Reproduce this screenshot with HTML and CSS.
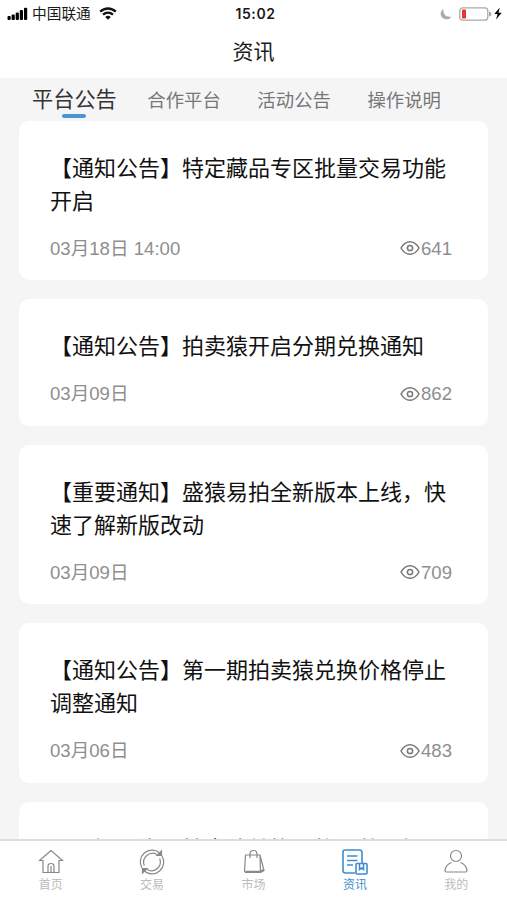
FILE: index.html
```html
<!DOCTYPE html>
<html lang="zh-CN">
<head>
    <meta charset="UTF-8">
    <meta name="viewport" content="width=device-width, initial-scale=1.0">
    <title>资讯</title>
    <link rel="stylesheet" href="styles.css">
</head>
<body>
    <svg class="symbols" width="0" height="0">
        <symbol id="eye" viewBox="0 0 20 16">
            <path d="M1 8C3.4 3.8 6.3 1.7 10 1.7S16.6 3.8 19 8C16.6 12.2 13.7 14.3 10 14.3S3.4 12.2 1 8Z"/>
            <circle cx="10" cy="8" r="2.6"/>
        </symbol>
    </svg>
    <div class="app">
        <header>
            <div class="status-bar">
                <div class="status-left">
                    <svg width="21" height="13" viewBox="0 0 21 13">
                        <rect x="0.5" y="9" width="3.2" height="4" rx="1"/>
                        <rect x="4.6" y="7.5" width="3.2" height="5.5" rx="1"/>
                        <rect x="8.7" y="5.5" width="3.2" height="7.5" rx="1"/>
                        <rect x="12.8" y="3" width="3.2" height="10" rx="1"/>
                        <rect x="17" y="0.8" width="3.2" height="12.2" rx="1"/>
                    </svg>
                    <span class="carrier">中国联通</span>
                    <svg class="wifi" width="18" height="13" viewBox="0 0 18 13">
                        <path d="M1.2 4.7C5.7 0.4 12.3 0.4 16.8 4.7M4 7.7C7 5 11 5 14 7.7"/>
                        <path class="solid" d="M9 12.7L6.2 9.9Q9 7.7 11.8 9.9Z"/>
                    </svg>
                </div>
                <span class="time">15:02</span>
                <div class="status-right">
                    <svg class="moon" width="12" height="12" viewBox="0 0 12 12">
                        <path d="M3.5 1C-0.5 3.5 0 8 3 10.2C6 12.3 10 11.4 11.3 8.4C6.5 9.8 2.5 6 3.5 1Z"/>
                    </svg>
                    <svg class="battery" width="33" height="14" viewBox="0 0 33 14">
                        <rect class="shell" x="0.8" y="0.8" width="28" height="12.4" rx="3"/>
                        <rect class="level" x="3" y="2.5" width="4" height="9" rx="0.8"/>
                        <path class="cap" d="M30 4.5Q32.5 5 32.5 7T30 9.5Z"/>
                    </svg>
                    <svg class="bolt" width="8" height="13" viewBox="0 0 8 13">
                        <path d="M5.8 0.5L0.3 7H3.6L2 12.5L7.7 5.7H4.4Z"/>
                    </svg>
                </div>
            </div>
            <h1>资讯</h1>
        </header>

        <nav class="tabs">
            <a class="tab active">平台公告</a>
            <a class="tab">合作平台</a>
            <a class="tab">活动公告</a>
            <a class="tab">操作说明</a>
        </nav>

        <main class="list">
            <article class="card">
                <h2>【通知公告】特定藏品专区批量交易功能开启</h2>
                <div class="meta">
                    <span>03月18日 14:00</span>
                    <span class="views"><svg class="eye"><use href="#eye"/></svg>641</span>
                </div>
            </article>
            <article class="card">
                <h2>【通知公告】拍卖猿开启分期兑换通知</h2>
                <div class="meta">
                    <span>03月09日</span>
                    <span class="views"><svg class="eye"><use href="#eye"/></svg>862</span>
                </div>
            </article>
            <article class="card">
                <h2>【重要通知】盛猿易拍全新版本上线，快速了解新版改动</h2>
                <div class="meta">
                    <span>03月09日</span>
                    <span class="views"><svg class="eye"><use href="#eye"/></svg>709</span>
                </div>
            </article>
            <article class="card">
                <h2>【通知公告】第一期拍卖猿兑换价格停止调整通知</h2>
                <div class="meta">
                    <span>03月06日</span>
                    <span class="views"><svg class="eye"><use href="#eye"/></svg>483</span>
                </div>
            </article>
            <article class="card">
                <h2>【通知公告】拍卖猿兑换价格调整通知</h2>
            </article>
        </main>

        <footer class="bottom-nav">
            <a class="nav-item">
                <svg width="26" height="26" viewBox="0 0 26 26">
                    <path d="M13 1.5L1.5 11.5H5V23.5H21V11.5H24.5ZM10 23V17Q10 14.5 13 14.5T16 17V23M13 17V23"/>
                </svg>
                <span>首页</span>
            </a>
            <a class="nav-item">
                <svg width="26" height="26" viewBox="0 0 26 26">
                    <path d="M3 19A11.8 11.8 0 0 1 20.5 3.7M23 7A11.8 11.8 0 0 1 5.5 22.3M5.3 16.5A8.9 8.9 0 0 1 18 5.5M20.7 9.5A8.9 8.9 0 0 1 8 20.5"/>
                    <path class="arrow" d="M18 6.5L22.5 2V6.5ZM8 19.5L3.5 24V19.5Z"/>
                </svg>
                <span>交易</span>
            </a>
            <a class="nav-item">
                <svg width="26" height="26" viewBox="0 0 26 26">
                    <path d="M4.5 6H19L23 21.5L19.5 23.5H4.5L3.5 22ZM19 6L19.5 23.5M9 9V5Q9 1.5 12.5 1.5T16 5V9"/>
                    <path class="thick" d="M4.5 22.8H19L22.5 21"/>
                </svg>
                <span>市场</span>
            </a>
            <a class="nav-item active">
                <svg width="26" height="26" viewBox="0 0 26 26">
                    <path d="M13 24H3.5Q1 24 1 21.5V3Q1 1 3 1H17.5Q20 1 20 3.5V14M5 7H15.5M5 11.5H15.5M5 16H11"/>
                    <rect x="14" y="14.5" width="11" height="10.5" rx="1"/>
                    <path d="M17.5 15V20.5L19.5 19L21.5 20.5V15"/>
                </svg>
                <span>资讯</span>
            </a>
            <a class="nav-item">
                <svg width="26" height="26" viewBox="0 0 26 26">
                    <circle cx="13" cy="7" r="5.5"/>
                    <path d="M8.5 13.5Q2.5 16 2 21.5Q2 23 3.5 23H22.5Q24 23 24 21.5Q23.5 16 17.5 13.5"/>
                </svg>
                <span>我的</span>
            </a>
        </footer>
    </div>
</body>
</html>
```

FILE: styles.css
```css
* {
    box-sizing: border-box;
}
body {
    margin: 0;
    font-family: "Liberation Sans", "Noto Sans CJK SC", sans-serif;
    background-color: #f5f5f6;
    color: #1a1a1a;
}
h1, h2 {
    margin: 0;
    font-weight: normal;
}
.symbols {
    display: block;
}
.app {
    display: flex;
    flex-direction: column;
    height: 100vh;
    overflow: hidden;
}
header {
    flex: none;
    height: 78px;
    background-color: #fff;
}
.status-bar {
    display: grid;
    grid-template-columns: 1fr auto 1fr;
    align-items: center;
    height: 27px;
    padding: 0 5px 0 7px;
}
.status-left, .status-right {
    display: flex;
    align-items: center;
}
.status-right {
    justify-content: flex-end;
}
.carrier {
    margin-left: 4px;
    font-size: 14.7px;
    line-height: 20px;
}
.wifi {
    margin-left: 8px;
    fill: none;
    stroke: #111;
    stroke-width: 2.3;
}
.wifi .solid {
    fill: #111;
    stroke: none;
}
.time {
    padding-left: 2px;
    font-family: Inter, sans-serif;
    font-size: 14px;
    font-weight: 600;
    letter-spacing: 0.6px;
}
.moon {
    fill: #aaa;
    margin-right: 7px;
}
.battery .shell {
    fill: none;
    stroke: #aaa;
    stroke-width: 1.3;
}
.battery .level {
    fill: #e5352d;
}
.battery .cap {
    fill: #aaa;
}
.bolt {
    margin-left: 2px;
}
h1 {
    padding-top: 9px;
    font-size: 21px;
    line-height: 32px;
    text-align: center;
}
.tabs {
    flex: none;
    display: flex;
    gap: 36.5px;
    height: 43px;
    padding-left: 32px;
}
.tab {
    font-size: 18.4px;
    line-height: 45px;
    color: #777;
}
.tab.active {
    position: relative;
    margin-right: -6px;
    font-size: 21.2px;
    line-height: 44px;
    color: #333;
}
.tab.active::after {
    content: "";
    position: absolute;
    left: 30px;
    bottom: 3px;
    width: 24px;
    height: 4px;
    border-radius: 2px;
    background-color: #4c93d4;
}
.list {
    flex: 1;
    min-height: 0;
    overflow: hidden;
    display: flex;
    flex-direction: column;
    gap: 19px;
    padding: 0 19px;
}
.card {
    flex: none;
    padding: 32px 31px 19.5px;
    border-radius: 10px;
    background-color: #fff;
}
.card h2 {
    margin-right: -5px;
    font-size: 22px;
    line-height: 32.8px;
    color: #111;
}
.meta {
    display: flex;
    justify-content: space-between;
    align-items: center;
    margin-top: 17.3px;
    padding-right: 5px;
    font-size: 18.6px;
    line-height: 25px;
    color: #8e8e8e;
}
.views {
    display: flex;
    align-items: center;
}
.eye {
    width: 20px;
    height: 16px;
    margin-right: 1px;
    fill: none;
    stroke: #777;
    stroke-width: 1.5;
}
.bottom-nav {
    flex: none;
    display: flex;
    height: 61px;
    border-top: 2px solid #ddd;
    background-color: #fff;
}
.nav-item {
    flex: 1;
    display: flex;
    flex-direction: column;
    align-items: center;
    padding-top: 8px;
    font-size: 12px;
    line-height: 18px;
    color: #bbb;
}
.nav-item svg {
    fill: none;
    stroke: #888;
    stroke-width: 1.2;
    margin-bottom: 1px;
}
.nav-item .arrow {
    fill: #888;
}
.nav-item .thick {
    stroke-width: 2;
}
.nav-item.active {
    color: #3f8ccf;
}
.nav-item.active svg {
    stroke: #3f8ccf;
    stroke-width: 1.6;
}
```
